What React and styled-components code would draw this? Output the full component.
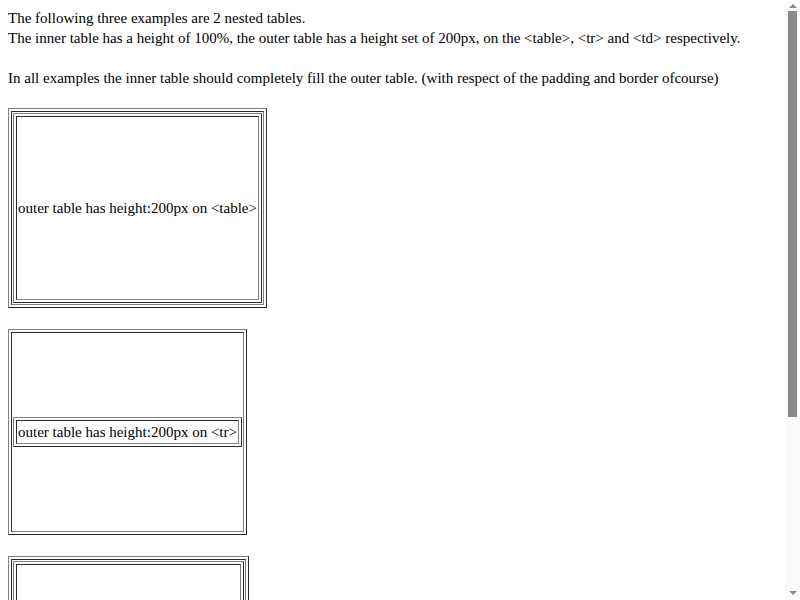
import React from 'react';
import styled, { createGlobalStyle } from 'styled-components';

const Global = createGlobalStyle`
  html, body { background: #fff; }
  body {
    margin: 8px;
    font-family: "Liberation Serif", "Times New Roman", serif;
    font-size: 15px;
    line-height: 20px;
    color: #000;
  }
`;

const Intro = styled.div`
  margin: 0 0 20px 0;
`;

const Examples = styled.div`
  display: flex;
  flex-direction: column;
  align-items: flex-start;
  gap: 21px;
`;

const OuterTable = styled.table`
  border: 1px outset gray;
  border-collapse: separate;
  border-spacing: 2px;
  height: ${(p) => p.$h || 'auto'};
`;

const OuterRow = styled.tr`
  height: ${(p) => p.$h || 'auto'};
`;

const Cell = styled.td`
  border: 1px inset gray;
  padding: 1px;
  vertical-align: middle;
  white-space: nowrap;
  height: ${(p) => p.$h || 'auto'};
`;

const InnerTable = styled.table`
  border: 1px outset gray;
  border-collapse: separate;
  border-spacing: 2px;
  height: 100%;
`;

const Scrollbar = styled.div`
  position: fixed;
  top: 0;
  right: 0;
  width: 15px;
  height: 100vh;
  background: #fafafa;
  display: flex;
  flex-direction: column;
  align-items: center;
`;

const Arrow = styled.div`
  width: 0;
  height: 0;
  margin: ${(p) => (p.$down ? 'auto 0 5px' : '4px 0 3px')};
  border-left: 4px solid transparent;
  border-right: 4px solid transparent;
  ${(p) => (p.$down ? 'border-top: 4px solid #8a8a8a;' : 'border-bottom: 4px solid #8a8a8a;')}
`;

const Thumb = styled.div`
  width: 9px;
  height: 406px;
  background: #8a8a8a;
`;

function Example({ on, table, tr, td }) {
  return (
    <OuterTable $h={table}>
      <tbody>
        <OuterRow $h={tr}>
          <Cell $h={td}>
            <InnerTable>
              <tbody>
                <tr>
                  <Cell>outer table has height:200px on {`<${on}>`}</Cell>
                </tr>
              </tbody>
            </InnerTable>
          </Cell>
        </OuterRow>
      </tbody>
    </OuterTable>
  );
}

export default function App() {
  return (
    <>
      <Global />
      <Intro>
        The following three examples are 2 nested tables.
        <br />
        The inner table has a height of 100%, the outer table has a height set of 200px, on the {'<table>'}, {'<tr>'} and {'<td>'} respectively.
        <br />
        <br />
        In all examples the inner table should completely fill the outer table. (with respect of the padding and border ofcourse)
      </Intro>
      <Examples>
        <Example on="table" table="200px" />
        <Example on="tr" tr="200px" />
        <Example on="td" td="200px" />
      </Examples>
      <Scrollbar>
        <Arrow />
        <Thumb />
        <Arrow $down />
      </Scrollbar>
    </>
  );
}
